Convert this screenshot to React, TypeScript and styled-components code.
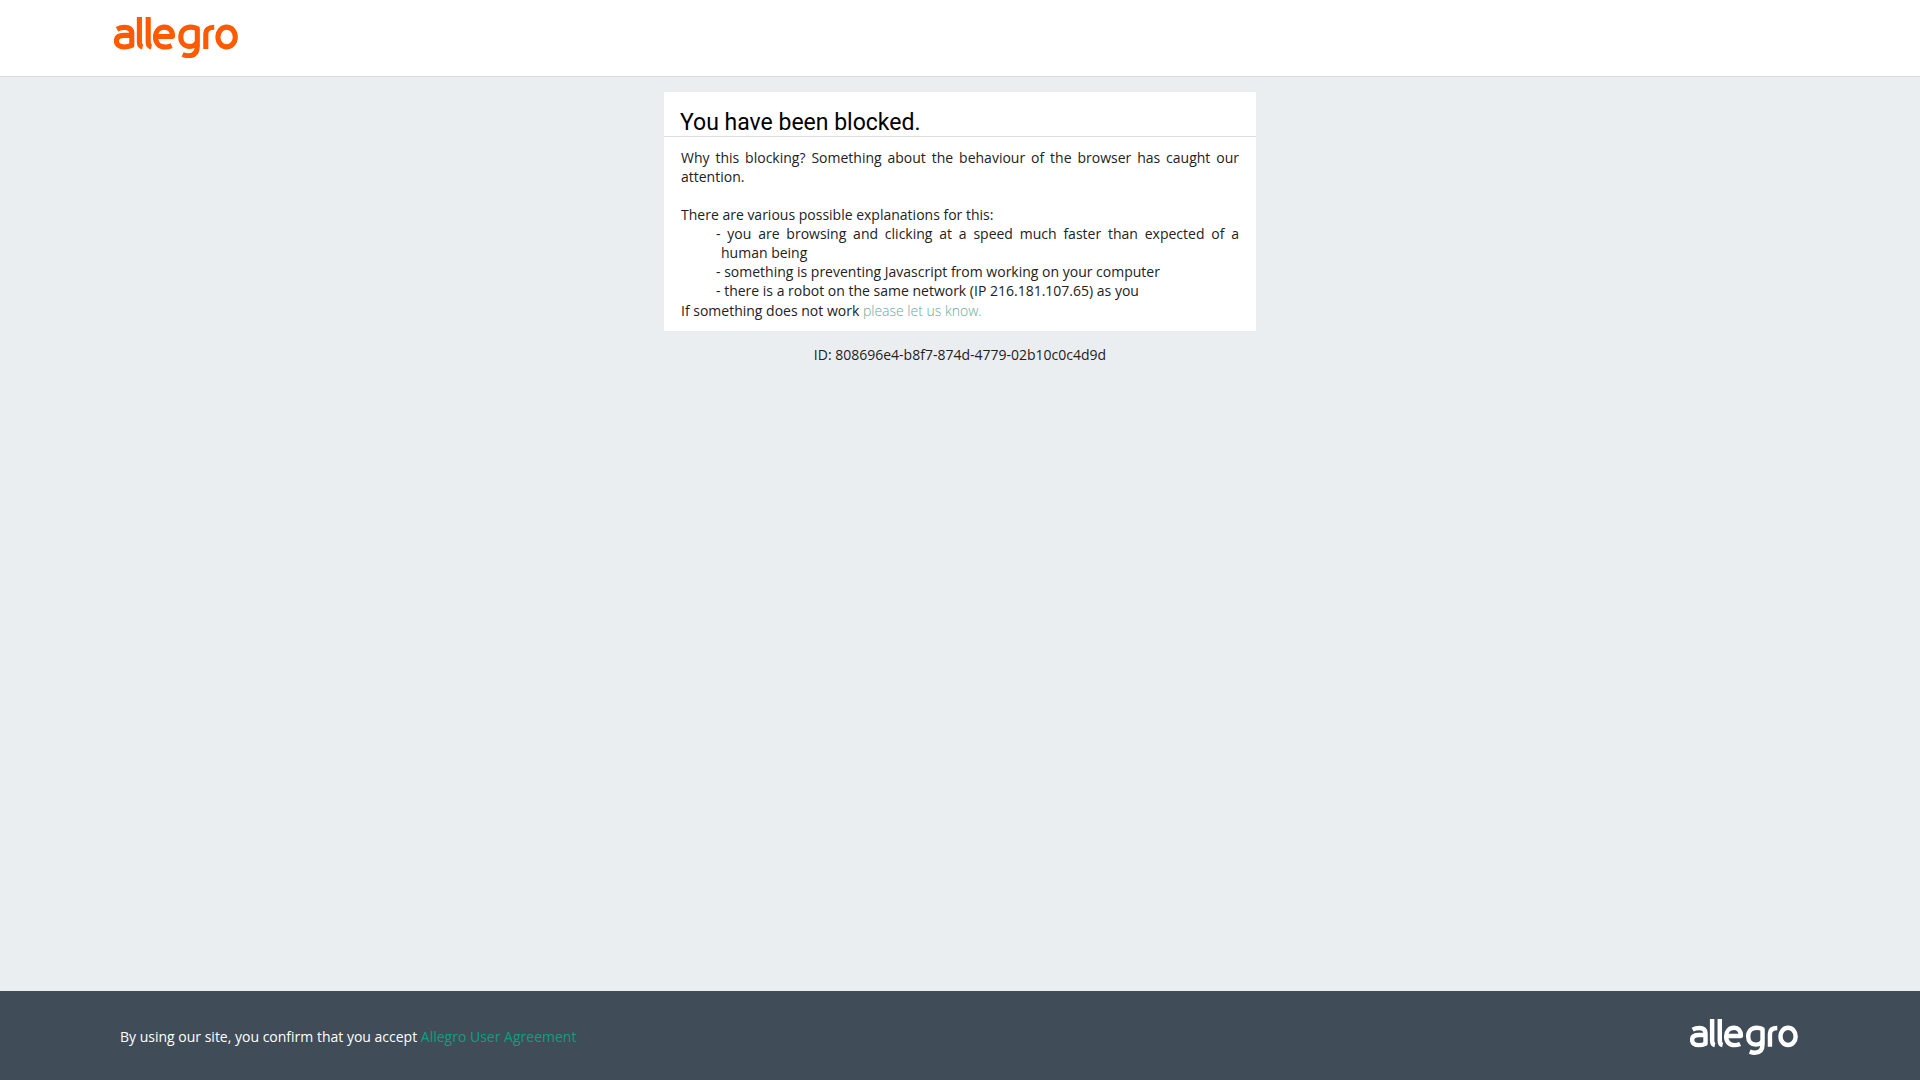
import React from "react";
import styled, { createGlobalStyle } from "styled-components";

const Global = createGlobalStyle`
  html, body { margin: 0; padding: 0; height: 100%; }
  body { background: #ebeef1; font-family: "Open Sans", "Liberation Sans", sans-serif; font-size: 14px; color: #222; }
  #root { height: 100%; }
`;

const Page = styled.div`
  display: flex;
  flex-direction: column;
  height: 100vh;
`;

const Header = styled.header`
  flex: none;
  box-sizing: content-box;
  height: 59px;
  background: #fff;
  border-bottom: 1px solid #d9dcdf;
  display: flex;
  align-items: flex-start;
  padding: 17px 0 0 114px;
`;

const Main = styled.main`
  flex: 1;
  display: flex;
  flex-direction: column;
  align-items: center;
  padding-top: 15px;
`;

const Card = styled.section`
  width: 592px;
  background: #fff;
  padding-bottom: 11px;
`;

const Title = styled.h1`
  margin: 0;
  height: 44px;
  box-sizing: content-box;
  padding: 0 17px 0 16px;
  font-family: Roboto, "Liberation Sans", sans-serif;
  font-weight: 400;
  font-size: 23px;
  line-height: 62px;
  color: #000;
  border-bottom: 1px solid #dcdfe1;
`;

const Body = styled.div`
  padding: 11px 17px 0;
  line-height: 19px;
`;

const Paragraph = styled.p`
  margin: 0 0 19px;
  text-align: justify;
`;

const Lead = styled.div``;

const Reasons = styled.ul`
  margin: 0;
  padding: 0 0 0 40px;
  list-style: none;
`;

const Reason = styled.li`
  text-indent: -5px;
  text-align: justify;
`;

const LastLine = styled.div`
  margin-top: 1px;
`;

const SoftLink = styled.a`
  color: #64aca0;
  font-weight: 300;
`;

const RequestId = styled.div`
  margin-top: 14px;
  line-height: 19px;
`;

const Footer = styled.footer`
  flex: none;
  height: 89px;
  background: #404d59;
  display: flex;
  align-items: center;
  justify-content: space-between;
  padding: 0 122px 0 120px;
  color: #fff;
`;

const Notice = styled.div`
  padding-top: 2px;
`;

const FooterLink = styled.a`
  color: #0f9d7f;
`;

const FooterLogo = styled.div`
  padding-top: 3px;
`;

const LogoSvg = styled.svg<{ $color: string }>`
  display: block;
  fill: none;
  stroke: ${(p) => p.$color};
  stroke-width: 5.1;
  stroke-linecap: butt;
  stroke-linejoin: round;
`;

const Logo = ({ color, width }: { color: string; width: number }) => (
  <LogoSvg $color={color} width={width} height={(width * 41) / 124} viewBox="0 0 124 41" role="img" aria-label="allegro">
    <path d="M3 12.2C5.4 10.9 8 10.4 10.6 10.4c4.6 0 7.2 2.2 7.2 6.2v11.8c-2.3 1-4.9 1.6-7.6 1.6C5.2 30 2.4 27.6 2.4 24c0-3.6 2.8-5.6 7.6-5.6h7.8" />
    <path d="M25.4 0v25c0 3 1.300 4.600 3.200 5" />
    <path d="M34.200 0v25c0 3 1.300 4.600 3.200 5" />
    <path d="M41.500 19.500h17c.2-5.800-3.100-9.400-8.100-9.400-5.200 0-8.900 4-8.900 10 0 6.200 3.800 9.900 9.700 9.900 2.300 0 4.400-.5 6.400-1.400" />
    <path d="M83.300 11.600c-2-1-4.300-1.500-6.800-1.500-5.700 0-9.700 4-9.700 9.900 0 5.700 3.700 9.400 8.800 9.400 3.700 0 6.800-1.700 7.700-5V11.600v17.400c0 7.300-3.700 9.700-8.700 9.700-2 0-4-.4-6-1.200" />
    <path d="M91.800 32V17c0-4.300 2.500-6.600 8.400-6.700" />
    <ellipse cx="112.600" cy="20" rx="8.700" ry="9.900" />
  </LogoSvg>
);

export default function App() {
  return (
    <Page>
      <Global />
      <Header>
        <Logo color="#ff5a00" width={124} />
      </Header>
      <Main>
        <Card>
          <Title>You have been blocked.</Title>
          <Body>
            <Paragraph>
              Why this blocking? Something about the behaviour of the browser has caught our attention.
            </Paragraph>
            <Lead>There are various possible explanations for this:</Lead>
            <Reasons>
              <Reason>- you are browsing and clicking at a speed much faster than expected of a human being</Reason>
              <Reason>- something is preventing Javascript from working on your computer</Reason>
              <Reason>- there is a robot on the same network (IP 216.181.107.65) as you</Reason>
            </Reasons>
            <LastLine>
              If something does not work <SoftLink>please let us know.</SoftLink>
            </LastLine>
          </Body>
        </Card>
        <RequestId>ID: 808696e4-b8f7-874d-4779-02b10c0c4d9d</RequestId>
      </Main>
      <Footer>
        <Notice>
          By using our site, you confirm that you accept <FooterLink>Allegro User Agreement</FooterLink>
        </Notice>
        <FooterLogo>
          <Logo color="#ffffff" width={108} />
        </FooterLogo>
      </Footer>
    </Page>
  );
}
